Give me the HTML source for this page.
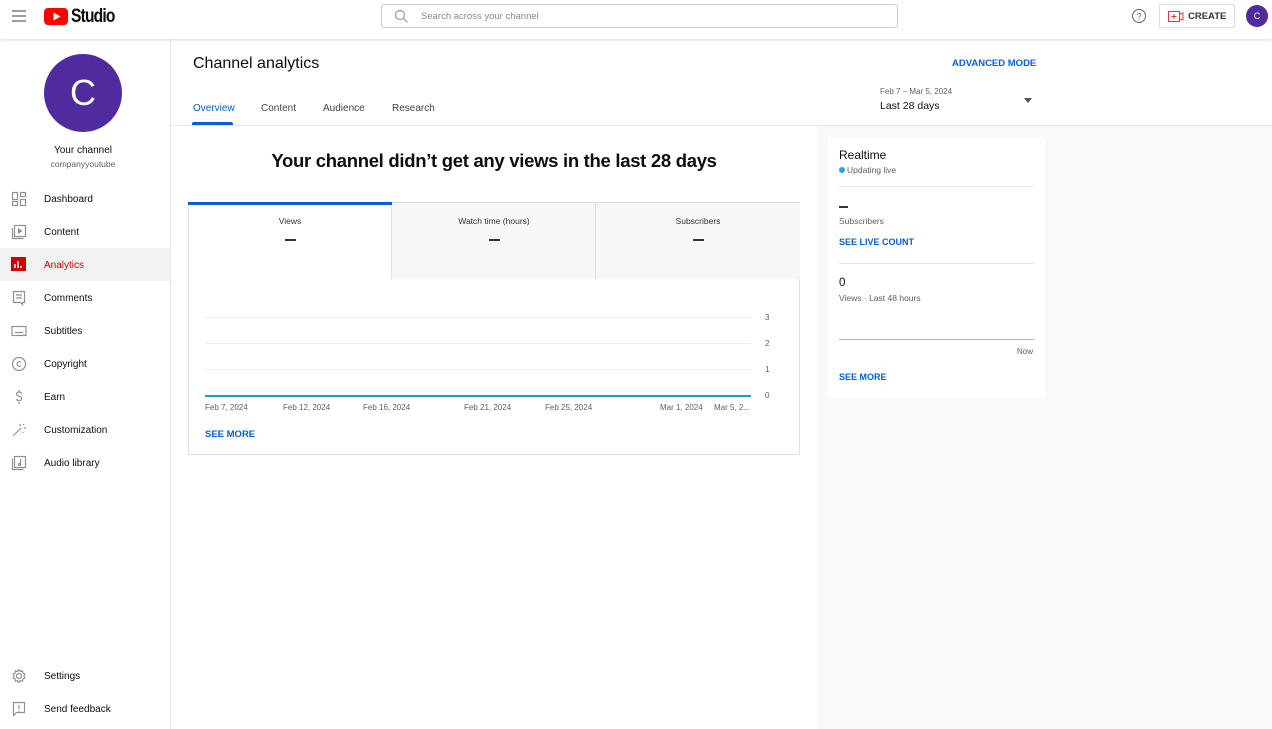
<!DOCTYPE html>
<html><head><meta charset="utf-8"><style>
*{box-sizing:border-box;margin:0;padding:0}
body{width:1272px;height:729px;overflow:hidden;background:#fff;font-family:"Liberation Sans",sans-serif;color:#0d0d0d;position:relative}
.a{position:absolute}
.nav{font-size:10px;color:#0d0d0d;left:44px}
.ic{left:11px;width:16px;height:16px;stroke:#909090;fill:none;stroke-width:1.2}
.blue{color:#065fd4;font-weight:bold;font-size:10px}
.g{color:#606060}
</style></head><body>
<!-- header -->
<div class="a" style="left:0;top:0;width:1272px;height:39px;background:#fff;box-shadow:0 1px 3px rgba(0,0,0,.15);z-index:2">
 <svg class="a" style="left:12px;top:10px" width="14" height="12"><path d="M0 1h14M0 6h14M0 11h14" stroke="#666" stroke-width="1.2"/></svg>
 <svg class="a" style="left:44px;top:8px" width="24" height="17"><rect width="24" height="17" rx="4" fill="#f00"/><path d="M9.5 4.5v8l7-4z" fill="#fff"/></svg>
 <div class="a" style="left:71px;top:6px;font-size:19px;font-weight:bold;letter-spacing:-1px;transform:scaleX(.82);transform-origin:left">Studio</div>
 <div class="a" style="left:381px;top:4px;width:517px;height:24px;border:1px solid #ccc;border-radius:3px">
  <svg class="a" style="left:12px;top:4px" width="14" height="14"><circle cx="6" cy="6" r="4.5" stroke="#999" fill="none" stroke-width="1.2"/><path d="M9.5 9.5l4 4" stroke="#999" stroke-width="1.2"/></svg>
  <div class="a g" style="left:39px;top:6px;font-size:9.5px;color:#888">Search across your channel</div>
 </div>
 <svg class="a" style="left:1131px;top:8px" width="16" height="16"><circle cx="8" cy="8" r="6.5" stroke="#666" fill="none"/><text x="8" y="11.5" font-size="9" text-anchor="middle" fill="#666" font-family="Liberation Sans">?</text></svg>
 <div class="a" style="left:1159px;top:4px;width:76px;height:24px;border:1px solid #ddd;border-radius:2px">
  <svg class="a" style="left:8px;top:6px" width="16" height="12"><rect x=".5" y=".5" width="11" height="10" stroke="#e33" fill="none"/><path d="M6 3v5M3.5 5.5h5" stroke="#e33"/><path d="M12 3l3-1v7l-3-1" stroke="#e33" fill="none"/></svg>
  <div class="a" style="left:28px;top:6px;font-size:9.5px;font-weight:bold;color:#333">CREATE</div>
 </div>
 <div class="a" style="left:1246px;top:5px;width:22px;height:22px;border-radius:50%;background:#4f2b9e;color:#fff;font-size:9px;text-align:center;line-height:22px">C</div>
</div>
<!-- sidebar -->
<div class="a" style="left:170px;top:39px;width:1px;height:690px;background:#e5e5e5"></div>
<div class="a" style="left:44px;top:54px;width:78px;height:78px;border-radius:50%;background:#4f2b9e;color:#fff;font-size:36px;text-align:center;line-height:78px">C</div>
<div class="a" style="left:0;top:145px;width:166px;text-align:center;font-size:10px">Your channel</div>
<div class="a g" style="left:0;top:159px;width:166px;text-align:center;font-size:8.5px">companyyoutube</div>
<div class="a" style="left:0;top:248px;width:170px;height:33px;background:#f2f2f2"></div>
<svg class="a ic" style="top:191px"><rect x="1.5" y="1.5" width="5" height="7"/><rect x="9.5" y="1.5" width="5" height="4"/><rect x="1.5" y="10.5" width="5" height="4"/><rect x="9.5" y="8.5" width="5" height="6"/></svg><div class="a nav" style="top:194px">Dashboard</div>
<svg class="a ic" style="top:224px"><rect x="3.5" y="1.5" width="11" height="11"/><path d="M1.5 4v10.5h11"/><path d="M7.5 5v4l3-2z" fill="#909090"/></svg><div class="a nav" style="top:227px">Content</div>
<svg class="a" style="left:11px;top:257px" width="16" height="16"><rect width="15" height="14" fill="#c00"/><path d="M4 11V7M7 11V4M10 11V9" stroke="#fff" stroke-width="1.5"/></svg><div class="a nav" style="top:260px;color:#c00">Analytics</div>
<svg class="a ic" style="top:290px"><path d="M2.5 1.5h11v11h-2v2l-2-2h-7z"/><path d="M5 5h6M5 8h6"/></svg><div class="a nav" style="top:293px">Comments</div>
<svg class="a ic" style="top:323px"><rect x="1" y="3.5" width="14" height="9"/><path d="M4 9.5h8"/></svg><div class="a nav" style="top:326px">Subtitles</div>
<svg class="a ic" style="top:356px"><circle cx="8" cy="8" r="6.5"/><path d="M10 6.3a2.3 2.3 0 1 0 0 3.4"/></svg><div class="a nav" style="top:359px">Copyright</div>
<svg class="a ic" style="top:389px"><path d="M10.5 4.5c-.5-1-1.5-1.5-2.5-1.5-1.5 0-2.5.8-2.5 2s1 1.8 2.5 2.2 2.7 1 2.7 2.3-1.2 2.2-2.7 2.2c-1.2 0-2.2-.6-2.7-1.5M8 1v2M8 13v2"/></svg><div class="a nav" style="top:392px">Earn</div>
<svg class="a ic" style="top:422px"><path d="M2 14l8-8M9 2v2M13 6h2M12 3l1-1M12 10v1"/></svg><div class="a nav" style="top:425px">Customization</div>
<svg class="a ic" style="top:455px"><rect x="3.5" y="1.5" width="11" height="11"/><path d="M1.5 4v10.5h11"/><path d="M9.5 4v5.5"/><circle cx="8.5" cy="9.5" r="1"/></svg><div class="a nav" style="top:458px">Audio library</div>
<svg class="a ic" style="top:668px"><circle cx="8" cy="8" r="2.5"/><path d="M8 1.5l1.3 1.8 2.2-.5.4 2.2 2 1-1 2 1 2-2 1-.4 2.2-2.2-.5L8 14.5l-1.3-1.8-2.2.5-.4-2.2-2-1 1-2-1-2 2-1 .4-2.2 2.2.5z"/></svg><div class="a nav" style="top:671px">Settings</div>
<svg class="a ic" style="top:701px"><path d="M2.5 1.5h11v10h-8l-3 3z"/><path d="M8 4v4M8 9.5v1"/></svg><div class="a nav" style="top:704px">Send feedback</div>
<!-- main -->
<div class="a" style="left:193px;top:55px;font-size:16px">Channel analytics</div>
<div class="a" style="left:193px;top:103px;font-size:10px;color:#065fd4">Overview</div>
<div class="a" style="left:192px;top:122px;width:41px;height:3px;background:#065fd4;border-radius:2px 2px 0 0"></div>
<div class="a g" style="left:261px;top:103px;font-size:10px;color:#444">Content</div>
<div class="a g" style="left:323px;top:103px;font-size:10px;color:#444">Audience</div>
<div class="a g" style="left:392px;top:103px;font-size:10px;color:#444">Research</div>
<div class="a blue" style="left:952px;top:58px;font-size:9.5px">ADVANCED MODE</div>
<div class="a g" style="left:880px;top:87px;font-size:8px">Feb 7 – Mar 5, 2024</div>
<div class="a" style="left:880px;top:100px;font-size:10.5px">Last 28 days</div>
<div class="a" style="left:1024px;top:98px;border:4px solid transparent;border-top:5px solid #555"></div>
<div class="a" style="left:171px;top:125px;width:1101px;height:1px;background:#e5e5e5"></div>
<div class="a" style="left:817px;top:126px;width:455px;height:603px;background:#f9f9f9"></div>
<div class="a" style="left:171px;top:150px;width:646px;text-align:center;font-size:18.5px;font-weight:bold;letter-spacing:-.3px">Your channel didn’t get any views in the last 28 days</div>
<!-- chart card -->
<div class="a" style="left:188px;top:202px;width:612px;height:253px;border:1px solid #e0e0e0">
 <div class="a" style="left:202px;top:0;width:409px;height:76px;background:#f7f7f7;border-left:1px solid #e0e0e0"></div>
 <div class="a" style="left:406px;top:0;width:1px;height:76px;background:#e0e0e0"></div>
 <div class="a" style="left:-1px;top:-1px;width:204px;height:3px;background:#065fd4"></div>
 <div class="a" style="left:0;top:13px;width:202px;text-align:center;font-size:8.5px;color:#333">Views</div>
 <div class="a" style="left:204px;top:13px;width:202px;text-align:center;font-size:8.5px;color:#333">Watch time (hours)</div>
 <div class="a" style="left:408px;top:13px;width:202px;text-align:center;font-size:8.5px;color:#333">Subscribers</div>
 <div class="a" style="left:96px;top:36px;width:11px;height:1.5px;background:#333"></div>
 <div class="a" style="left:300px;top:36px;width:11px;height:1.5px;background:#333"></div>
 <div class="a" style="left:504px;top:36px;width:11px;height:1.5px;background:#333"></div>
 <div class="a" style="left:16px;top:114px;width:546px;height:1px;background:#eee"></div>
 <div class="a" style="left:16px;top:140px;width:546px;height:1px;background:#eee"></div>
 <div class="a" style="left:16px;top:166px;width:546px;height:1px;background:#eee"></div>
 <div class="a" style="left:16px;top:192px;width:546px;height:2px;background:#2196d3"></div>
 <div class="a g" style="left:576px;top:110px;font-size:8px">3</div>
 <div class="a g" style="left:576px;top:136px;font-size:8px">2</div>
 <div class="a g" style="left:576px;top:162px;font-size:8px">1</div>
 <div class="a g" style="left:576px;top:188px;font-size:8px">0</div>
 <div class="a g" style="top:200px;left:16px;font-size:8px;width:560px">
  <span class="a" style="left:0">Feb&nbsp;7,&nbsp;2024</span><span class="a" style="left:78px">Feb&nbsp;12,&nbsp;2024</span><span class="a" style="left:158px">Feb&nbsp;16,&nbsp;2024</span><span class="a" style="left:259px">Feb&nbsp;21,&nbsp;2024</span><span class="a" style="left:340px">Feb&nbsp;25,&nbsp;2024</span><span class="a" style="left:455px">Mar&nbsp;1,&nbsp;2024</span><span class="a" style="left:509px">Mar&nbsp;5,&nbsp;2...</span>
 </div>
 <div class="a blue" style="left:16px;top:226px;font-size:9.5px">SEE MORE</div>
</div>
<!-- realtime -->
<div class="a" style="left:828px;top:137px;width:217px;height:261px;background:#fff;border-radius:4px">
 <div class="a" style="left:11px;top:11px;font-size:12px">Realtime</div>
 <div class="a" style="left:11px;top:30px;width:6px;height:6px;border-radius:50%;background:#2ba3d6"></div>
 <div class="a g" style="left:19px;top:28px;font-size:8.5px">Updating live</div>
 <div class="a" style="left:11px;top:49px;width:195px;height:1px;background:#e5e5e5"></div>
 <div class="a" style="left:11px;top:69px;width:9px;height:1.5px;background:#333"></div>
 <div class="a g" style="left:11px;top:79px;font-size:8.5px">Subscribers</div>
 <div class="a blue" style="left:11px;top:100px;font-size:9px">SEE LIVE COUNT</div>
 <div class="a" style="left:11px;top:126px;width:195px;height:1px;background:#e5e5e5"></div>
 <div class="a" style="left:11px;top:140px;font-size:11.5px">0</div>
 <div class="a g" style="left:11px;top:156px;font-size:8.5px">Views · Last 48 hours</div>
 <div class="a" style="left:11px;top:202px;width:195px;height:1px;background:#bbb"></div>
 <div class="a g" style="left:189px;top:210px;font-size:8px">Now</div>
 <div class="a blue" style="left:11px;top:235px;font-size:9px">SEE MORE</div>
</div>
</body></html>
